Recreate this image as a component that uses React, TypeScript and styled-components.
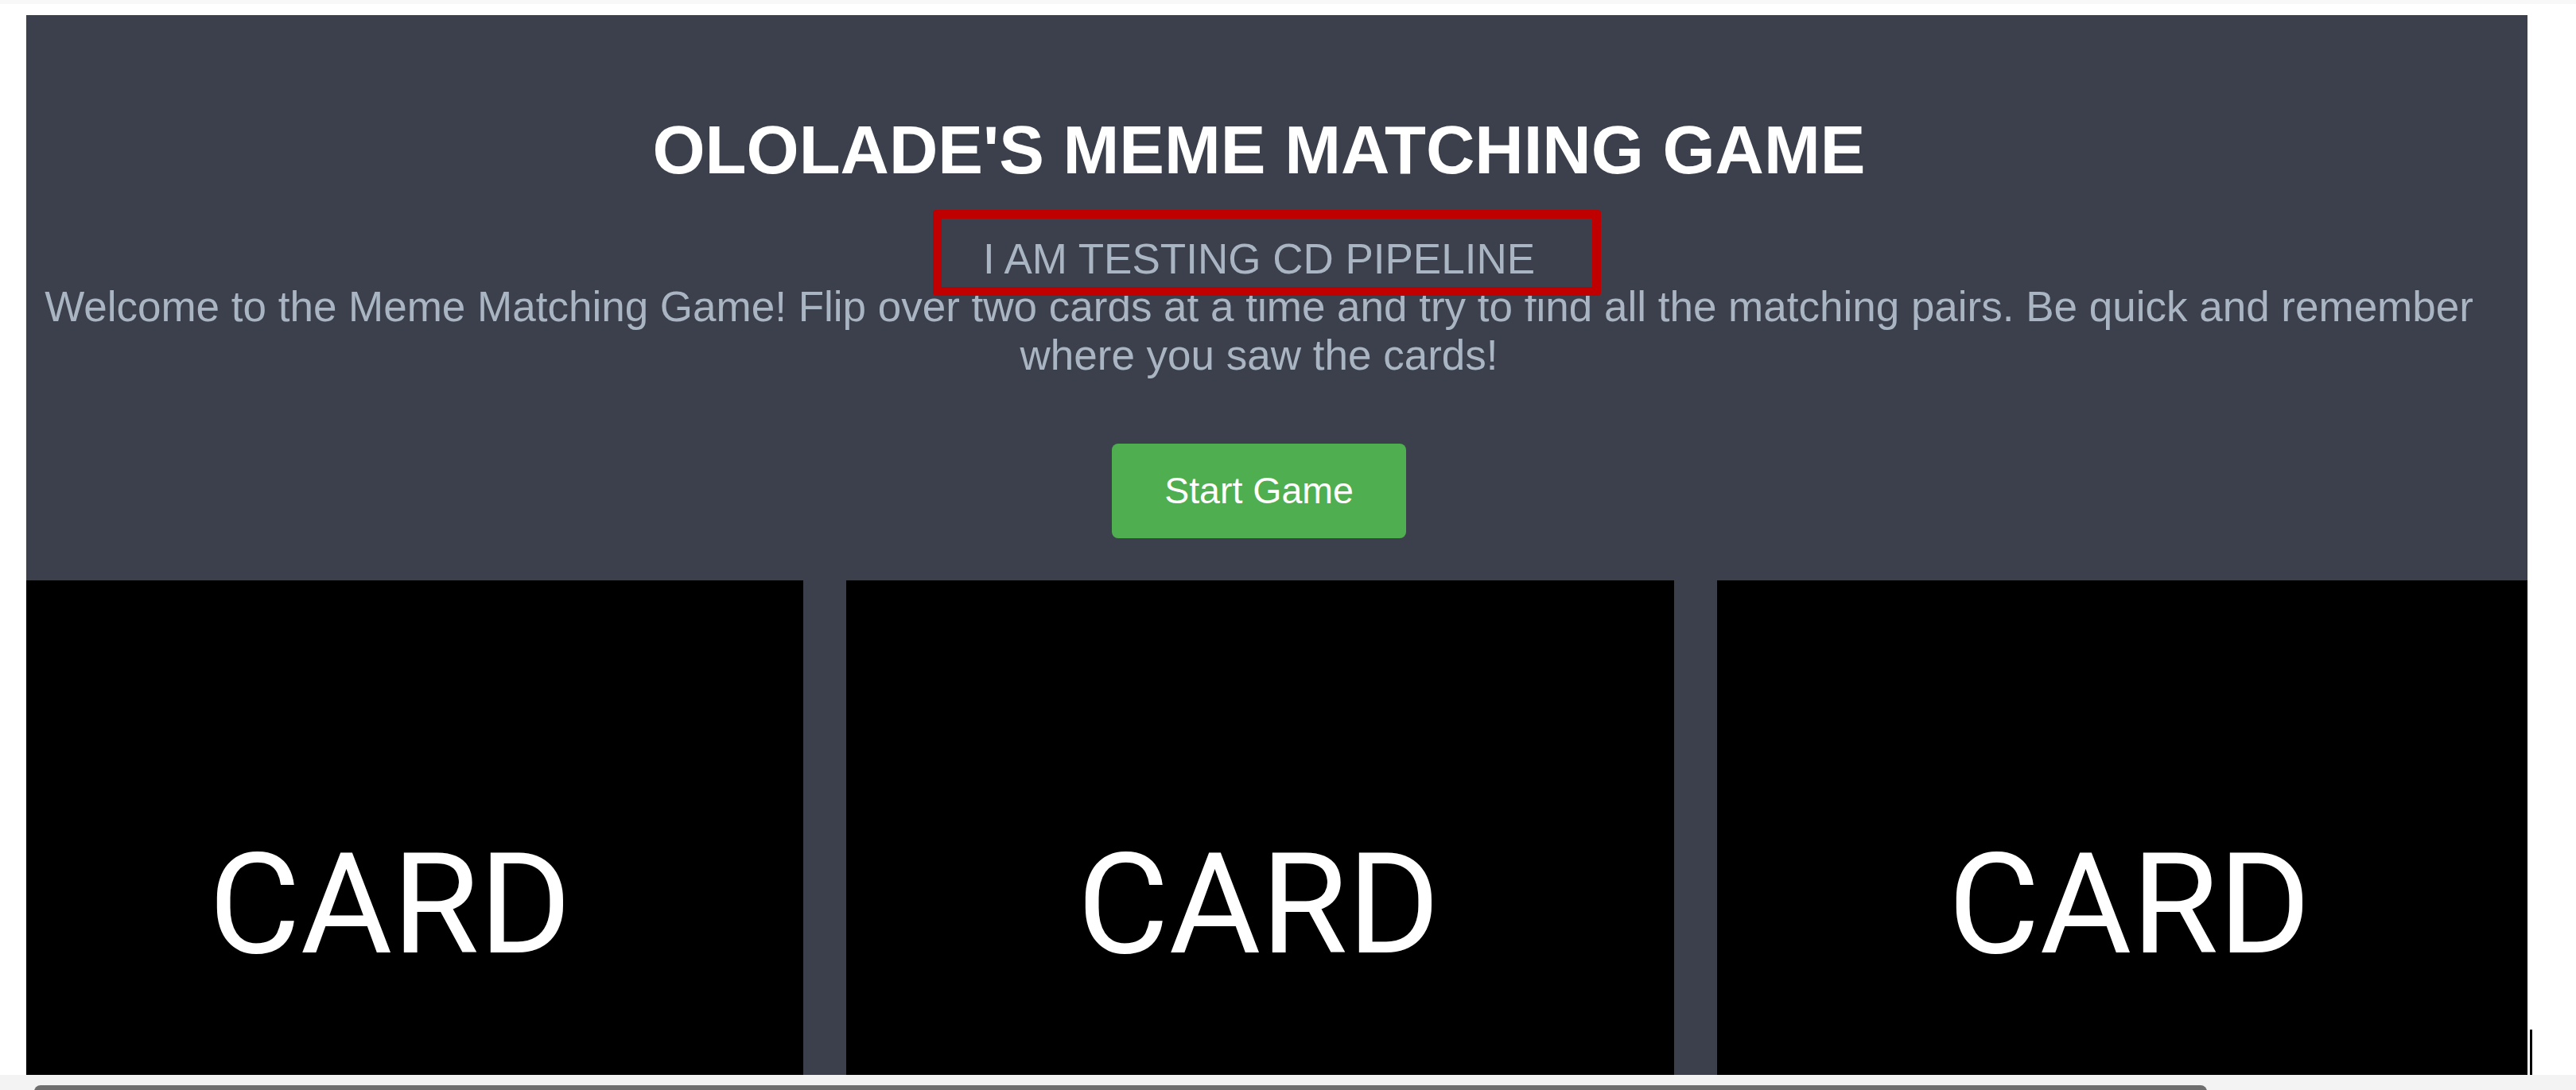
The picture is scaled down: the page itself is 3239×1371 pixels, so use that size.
import React from "react";
import styled, { createGlobalStyle } from "styled-components";

const GlobalStyle = createGlobalStyle`
  html, body {
    margin: 0;
    padding: 0;
    background: #ffffff;
  }
  body {
    font-family: "Liberation Sans", Arial, sans-serif;
  }
`;

const TopStrip = styled.div`
  height: 5px;
  background: #f8f8f8;
`;

const Page = styled.div`
  padding: 14px 61px 0 33px;
  width: 3145px;
`;

const Panel = styled.main`
  background: #3c404c;
  display: flex;
  flex-direction: column;
`;

const Header = styled.header`
  padding: 121px 45px 53px 0;
  display: flex;
  flex-direction: column;
  align-items: center;
  text-align: center;
`;

const Title = styled.h1`
  margin: 0;
  font-family: "Liberation Sans", Arial, sans-serif;
  font-weight: 700;
  font-size: 85px;
  line-height: 1.15;
  color: #ffffff;
`;

const Subtitle = styled.h2`
  position: relative;
  margin: 58px 0 0;
  width: 100%;
  font-family: "Liberation Sans", Arial, sans-serif;
  font-weight: 400;
  font-size: 53px;
  line-height: 1.14;
  color: #aab5c3;
`;

const Annotation = styled.span`
  position: absolute;
  left: calc(50% - 410px);
  top: -32px;
  width: 840px;
  height: 108px;
  box-sizing: border-box;
  border: 11px solid #c00000;
  border-radius: 4px;
  z-index: 2;
  pointer-events: none;
`;

const Intro = styled.p`
  margin: 0;
  font-family: "Liberation Sans", Arial, sans-serif;
  font-size: 53px;
  line-height: 1.14;
  color: #aab5c3;
`;

const StartButton = styled.button`
  margin-top: 81px;
  width: 370px;
  height: 119px;
  border: none;
  border-radius: 8px;
  background: #4fae4f;
  color: #ffffff;
  font-family: "Liberation Sans", Arial, sans-serif;
  font-size: 46.5px;
  line-height: 1.15;
  cursor: pointer;
`;

const CardGrid = styled.section`
  display: grid;
  grid-template-columns: 977px 1041px 1fr;
  column-gap: 54px;
`;

const Card = styled.div<{ $shift: number }>`
  height: 800px;
  background: #000000;
  display: flex;
  justify-content: center;
  align-items: flex-start;
  box-sizing: border-box;
  padding-top: 319px;
  padding-left: ${(p) => (p.$shift > 0 ? p.$shift * 2 : 0)}px;
  padding-right: ${(p) => (p.$shift < 0 ? -p.$shift * 2 : 0)}px;
`;

const CardLabel = styled.span`
  font-family: Roboto, "Noto Sans", sans-serif;
  font-size: 177px;
  line-height: 1;
  color: #ffffff;
`;

const ScrollTrack = styled.div`
  position: fixed;
  left: 0;
  right: 0;
  bottom: 0;
  height: 19px;
  background: #f3f3f3;
  z-index: 5;
`;

const ScrollThumb = styled.div`
  position: absolute;
  left: 43px;
  top: 13px;
  width: 2732px;
  height: 12px;
  background: #6e6e6e;
  border-radius: 8px 8px 0 0;
`;

const Caret = styled.div`
  position: fixed;
  left: 3181px;
  bottom: 19px;
  width: 3px;
  height: 57px;
  background: #000000;
  z-index: 5;
`;

const cards = [
  { id: 1, shift: -31 },
  { id: 2, shift: -2 },
  { id: 3, shift: 9 },
];

export default function App() {
  return (
    <>
      <GlobalStyle />
      <TopStrip />
      <Page>
        <Panel>
          <Header>
            <Title>OLOLADE'S MEME MATCHING GAME</Title>
            <Subtitle>
              I AM TESTING CD PIPELINE
              <Annotation />
            </Subtitle>
            <Intro>
              Welcome to the Meme Matching Game! Flip over two cards at a time and try to find all the
              matching pairs. Be quick and remember where you saw the cards!
            </Intro>
            <StartButton>Start Game</StartButton>
          </Header>
          <CardGrid>
            {cards.map((c) => (
              <Card key={c.id} $shift={c.shift}>
                <CardLabel>CARD</CardLabel>
              </Card>
            ))}
          </CardGrid>
        </Panel>
      </Page>
      <Caret />
      <ScrollTrack>
        <ScrollThumb />
      </ScrollTrack>
    </>
  );
}
